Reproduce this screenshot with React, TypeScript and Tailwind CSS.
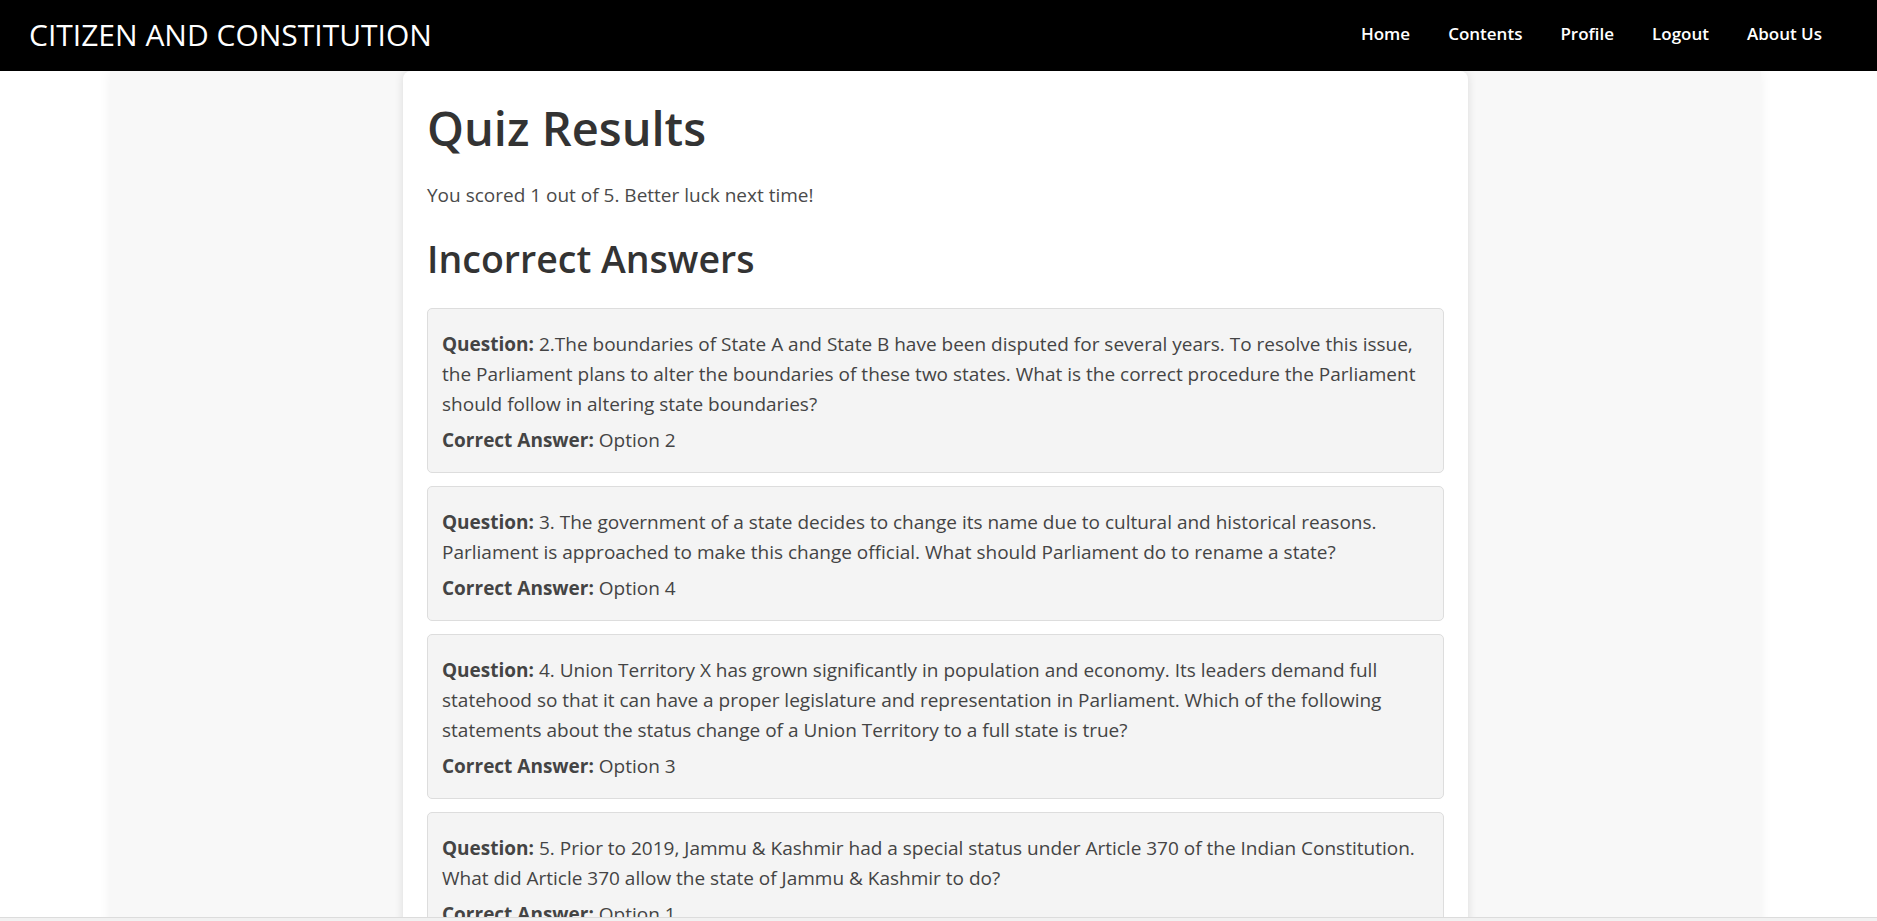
const wrong = [
  {
    id: 2,
    question:
      "2.The boundaries of State A and State B have been disputed for several years. To resolve this issue, the Parliament plans to alter the boundaries of these two states. What is the correct procedure the Parliament should follow in altering state boundaries?",
    answer: "Option 2",
  },
  {
    id: 3,
    question:
      "3. The government of a state decides to change its name due to cultural and historical reasons. Parliament is approached to make this change official. What should Parliament do to rename a state?",
    answer: "Option 4",
  },
  {
    id: 4,
    question:
      "4. Union Territory X has grown significantly in population and economy. Its leaders demand full statehood so that it can have a proper legislature and representation in Parliament. Which of the following statements about the status change of a Union Territory to a full state is true?",
    answer: "Option 3",
  },
  {
    id: 5,
    question:
      "5. Prior to 2019, Jammu & Kashmir had a special status under Article 370 of the Indian Constitution. What did Article 370 allow the state of Jammu & Kashmir to do?",
    answer: "Option 1",
  },
];

const links = ["Home", "Contents", "Profile", "Logout", "About Us"];

export default function App() {
  return (
    <div className="min-h-screen bg-white font-['Open_Sans',sans-serif] text-[#333]">
      {/* navbar */}
      <nav className="flex h-[71px] items-center justify-between bg-black pb-[3px] pl-[29px] pr-[55px]">
        <a className="text-[30px] text-white">CITIZEN AND CONSTITUTION</a>
        <ul className="flex gap-[38px]">
          {links.map((l) => (
            <li key={l} className="text-[17px] font-semibold text-white">
              {l}
            </li>
          ))}
        </ul>
      </nav>

      {/* page */}
      <div className="ml-[110px] w-[1651px] bg-[#f8f8f8] shadow-[0_0_12px_rgba(0,0,0,0.06)]">
        <main className="ml-[293px] w-[1065px] rounded-t-lg bg-white px-6 pt-[29px] pb-10 shadow-[0_0_10px_rgba(0,0,0,0.12)]">
          <h1 className="text-[47px] leading-[57px] font-semibold text-[#333]">Quiz Results</h1>
          <p className="mt-[24px] text-[19px] leading-[28.8px] text-[#4a4a4a]">
            You scored 1 out of 5. Better luck next time!
          </p>
          <h2 className="mt-[26px] text-[37.5px] leading-[46px] font-semibold text-[#333]">
            Incorrect Answers
          </h2>

          <div className="mt-[26px] flex flex-col gap-[13px]">
            {wrong.map((q) => (
              <div
                key={q.id}
                className="rounded-[5px] border border-[#ddd] bg-[#f4f4f4] px-[14px] pt-[20px] pb-[17px] text-[19px] leading-[30px] text-[#444]"
              >
                <p>
                  <strong className="font-bold text-[#444]">Question:</strong> {q.question}
                </p>
                <p className="mt-[6px]">
                  <strong className="font-bold text-[#444]">Correct Answer:</strong> {q.answer}
                </p>
              </div>
            ))}
          </div>
        </main>
      </div>

      {/* bottom edge of the window */}
      <div className="fixed bottom-0 left-0 h-[4px] w-full border-t border-[#dcdcdc] bg-[#f1f1f1]" />
    </div>
  );
}
